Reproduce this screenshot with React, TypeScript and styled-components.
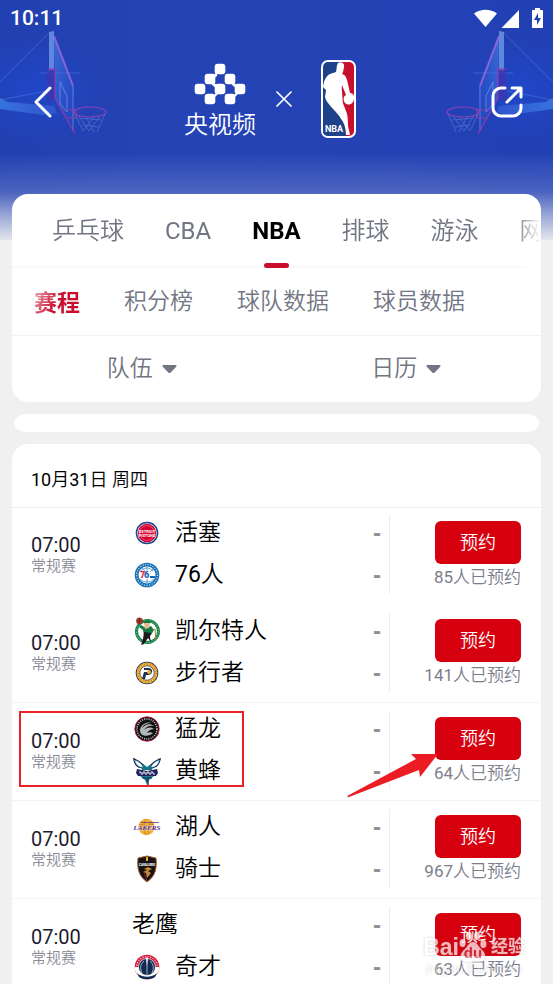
import React, { useState } from "react";
import styled, { createGlobalStyle } from "styled-components";

const GlobalStyle = createGlobalStyle`
  * { box-sizing: border-box; }
  html { scrollbar-width: none; }
  body {
    margin: 0;
    background: #f0f0f0;
    font-family: Roboto, "Noto Sans CJK SC DemiLight", "Noto Sans CJK SC", sans-serif;
    line-height: 1.2;
    color: #000;
  }
  button, select { font: inherit; color: inherit; background: none; border: 0; padding: 0; margin: 0; cursor: pointer; }
`;

const Page = styled.div`
  position: relative;
  min-height: 100vh;
  overflow: hidden;
`;

const Backdrop = styled.div`
  position: absolute;
  inset: 0 0 auto 0;
  height: 240px;
  background:
    linear-gradient(180deg, rgba(240, 240, 240, 0) 152px, rgba(240, 240, 240, 0.2) 192px, rgba(240, 240, 240, 0.56) 214px, rgba(240, 240, 240, 0.94) 240px),
    linear-gradient(90deg, #2140b2, #2443b5 30%, #2442b4 70%, #2140b4);
`;

const Hoop = styled.svg<{ $mirrored?: boolean }>`
  position: absolute;
  top: 20px;
  width: 120px;
  height: 130px;
  ${(p) => (p.$mirrored ? "right: 0; transform: scaleX(-1);" : "left: 0;")}
`;

const TopArea = styled.header`
  position: relative;
  color: #fff;
`;

const StatusBar = styled.div`
  display: flex;
  align-items: center;
  justify-content: space-between;
  height: 38px;
  padding: 0 10px;
  font-size: 21px;
  font-weight: 500;
`;

const StatusIcons = styled.svg`
  width: 70px;
  height: 22px;
`;

const NavBar = styled.div`
  display: flex;
  align-items: center;
  justify-content: space-between;
  height: 122px;
  padding: 0 30px 0 34px;
`;

const IconButton = styled.button`
  display: flex;
  padding: 6px 0 0;
`;

const Brands = styled.div`
  display: flex;
  align-items: center;
  width: 175px;
`;

const Brand = styled.div`
  display: flex;
  flex: none;
  flex-direction: column;
  align-items: center;
  width: 72px;
  font-size: 24px;
  line-height: 28px;
  font-weight: 500;
  white-space: nowrap;
  gap: 6px;
  padding-top: 4px;
`;

const CrossMark = styled.svg`
  margin: 0 29px 0 20px;
  flex: none;
  overflow: visible;
`;

const Main = styled.main`
  position: relative;
  display: flex;
  flex-direction: column;
  gap: 12px;
  padding: 34px 12px 0;
`;

const Card = styled.section`
  position: relative;
  background: #fff;
  border-radius: 16px;
`;

const SportTabs = styled.nav`
  display: flex;
  gap: 41px;
  height: 74px;
  padding-left: 40px;
  overflow: hidden;
  box-shadow: inset 0 -2px 0 #f9f9f9;
  mask-image: linear-gradient(90deg, #000 95%, transparent 100%);
`;

const SportTab = styled.button<{ $active: boolean }>`
  position: relative;
  flex: none;
  font-size: 24px;
  white-space: nowrap;
  color: ${(p) => (p.$active ? "#000" : "#727583")};
  font-weight: ${(p) => (p.$active ? 700 : 400)};
  &::after {
    content: "";
    display: ${(p) => (p.$active ? "block" : "none")};
    position: absolute;
    left: calc(50% - 12px);
    bottom: 0;
    width: 25px;
    height: 5px;
    border-radius: 3px;
    background: #c8102e;
  }
`;

const SectionTabs = styled.nav`
  display: flex;
  gap: 44px;
  height: 68px;
  padding-left: 22px;
  border-bottom: 1px solid #f3f3f3;
`;

const SectionTab = styled.button<{ $active: boolean }>`
  flex: none;
  font-size: 23px;
  font-family: ${(p) => (p.$active ? '"Noto Sans CJK SC", sans-serif' : "inherit")};
  font-weight: ${(p) => (p.$active ? 700 : 400)};
  color: ${(p) => (p.$active ? "transparent" : "#727583")};
  background: ${(p) => (p.$active ? "linear-gradient(120deg, #e896a4 20%, #c8102e 50%)" : "none")};
  background-clip: text;
`;

const Filters = styled.div`
  display: grid;
  grid-template-columns: 1fr 1fr;
  height: 66px;
`;

const Filter = styled.label`
  display: flex;
  align-items: center;
  justify-content: center;
  gap: 9px;
  padding-right: 5px;
  color: #727583;
`;

const FilterSelect = styled.select`
  appearance: none;
  font-size: 23px;
  width: 46px;
  height: 34px;
  outline: none;
`;

const Pill = styled.div`
  height: 18px;
  margin: 0 2px;
  border-radius: 12px / 9px;
  background: #fff;
`;

const ScheduleCard = styled(Card)`
  padding-bottom: 24px;
`;

const DateHeading = styled.h2`
  display: flex;
  align-items: center;
  height: 63px;
  margin: 0;
  padding: 9px 19px 0;
  font-size: 18px;
  font-weight: 400;
  box-shadow: 0 1px 0 #ededed;
`;

const Matches = styled.ul`
  margin: 0;
  padding: 0;
  list-style: none;
`;

const MatchRow = styled.li<{ $line: boolean }>`
  position: relative;
  display: grid;
  grid-template-columns: 101px 1fr 8px 152px;
  height: 98px;
  padding-left: 19px;
  border-bottom: 1px solid ${(p) => (p.$line ? "#f4f4f4" : "transparent")};
`;

const Kickoff = styled.div`
  display: flex;
  flex-direction: column;
  justify-content: center;
  padding-bottom: 1px;
`;

const Time = styled.time`
  font-size: 20px;
  line-height: 22px;
  color: #1d1b2e;
`;

const Stage = styled.span`
  font-size: 15px;
  line-height: 20px;
  color: #898b96;
`;

const Teams = styled.div`
  display: flex;
  flex-direction: column;
  padding: 5px 0 8px;
`;

const TeamLine = styled.div`
  display: flex;
  align-items: center;
  gap: 13px;
  height: 42px;
  font-size: 23px;
`;

const Crest = styled.svg`
  flex: none;
  width: 30px;
  height: 30px;
`;

const Score = styled.span`
  margin-left: auto;
  font-family: "Liberation Sans", sans-serif;
  font-size: 24px;
  font-weight: 700;
  color: #909097;
`;

const Booking = styled.div`
  display: flex;
  flex-direction: column;
  align-items: flex-end;
  margin: 8px 0 10px;
  padding: 6px 20px 0 0;
  border-left: 1px solid #ececf2;
`;

const BookButton = styled.button`
  width: 86px;
  height: 43px;
  flex: none;
  border-radius: 6px;
  background: #d7000f;
  color: #fff;
  font-size: 18px;
`;

const Booked = styled.span`
  font-size: 17px;
  line-height: 26px;
  color: #7b7e8a;
  white-space: nowrap;
`;

const Highlight = styled.div`
  position: absolute;
  left: 7px;
  top: 8px;
  width: 225px;
  height: 76px;
  border: 2px solid #ec2027;
`;

const Arrow = styled.svg`
  position: absolute;
  right: 100px;
  top: 48px;
  width: 94px;
  height: 48px;
`;

const Watermark = styled.div`
  position: fixed;
  right: 28px;
  bottom: 10px;
  color: #fff;
  opacity: 0.72;
  pointer-events: none;
  text-align: right;
  filter: drop-shadow(0 0 1px rgba(110, 110, 120, 0.5));
`;

const WatermarkName = styled.div`
  display: flex;
  align-items: center;
  justify-content: flex-end;
  font: 700 23px/26px "Liberation Sans", "Noto Sans CJK SC", sans-serif;
`;

const WatermarkCn = styled.span`
  margin-left: 4px;
  font-size: 17px;
`;

const WatermarkUrl = styled.div`
  font: 400 12px/10px "Liberation Sans", sans-serif;
  text-align: center;
  opacity: 0.6;
`;

const PawIcon = () => (
  <svg width="28" height="34" viewBox="0 0 28 34">
    <g fill="#fff">
      <ellipse cx="3.6" cy="13" rx="3" ry="4" />
      <ellipse cx="10" cy="6" rx="3" ry="4.3" />
      <ellipse cx="18" cy="6" rx="3" ry="4.3" />
      <ellipse cx="24.4" cy="14" rx="3" ry="4" />
      <path d="M14 12c4 0 5 4 8 7s5 5 4 9c-1 5-6 4-12 4S3 33 2 28c-1-4 1-6 4-9s4-7 8-7Z" />
    </g>
    <text x="14" y="28" fontFamily="Liberation Sans" fontWeight="700" fontSize="15" fill="#c83a44" textAnchor="middle">du</text>
  </svg>
);

function HoopArt() {
  return (
    <>
      <defs>
        <linearGradient id="board" x1="0" y1="0" x2="1" y2="1">
          <stop offset="0" stopColor="#5b9bf0" />
          <stop offset="1" stopColor="#2b4ed0" stopOpacity=".3" />
        </linearGradient>
        <radialGradient id="glow">
          <stop offset="0" stopColor="#1f4ad6" stopOpacity=".6" />
          <stop offset="1" stopColor="#1f4ad6" stopOpacity="0" />
        </radialGradient>
        <linearGradient id="arm" x1="0" y1="0" x2="1" y2="0">
          <stop offset="0" stopColor="#3c7fe4" />
          <stop offset="1" stopColor="#3f69dd" stopOpacity=".6" />
        </linearGradient>
      </defs>
      <ellipse cx="34" cy="70" rx="66" ry="50" fill="url(#glow)" />
      <path d="M0 78l8 4 46 4 3 7-14 2-43-6Z" fill="url(#arm)" opacity=".8" />
      <path d="M0 62L50 12M0 80l46-9M40 53h40" stroke="#4872dc" strokeWidth="1" opacity=".65" fill="none" />
      <path d="M49 12l5-1v40h-5Z" fill="#6f98e8" opacity=".8" />
      <path d="M54 16l20 51-1 44-18-33Z" fill="url(#board)" opacity=".5" />
      <path d="M54 16l19 50" stroke="#a86be0" strokeWidth="2" opacity=".75" />
      <path d="M73 66v45M60 62v22l7 8V76Z" stroke="#789bed" fill="none" opacity=".65" />
      <path d="M47 49h8v29l-8 4Z" fill="#3d35ad" opacity=".75" />
      <path d="M47 49h8v29l20 36M66 90h10v8H67" stroke="#a336a5" strokeWidth="1.2" fill="none" opacity=".85" />
      <ellipse cx="90" cy="92" rx="16" ry="5" stroke="#8f40b4" strokeWidth="1.2" fill="none" />
      <path d="M75 94l8 17M79 96l10 15M86 97l8 15M105 94l-8 18M100 96l-11 15M94 97l-11 14M79 98l22 2M83 105l15 2" stroke="#6c89dc" strokeWidth="1" opacity=".5" />
    </>
  );
}

const YangshipinMark = () => (
  <svg width="52" height="42" viewBox="0 0 52 42" fill="#fff">
    {[[26, 6], [16, 16], [36, 16], [6, 26], [26, 26], [46, 26], [16, 36], [36, 36]].map(([x, y]) => (
      <rect key={`${x}-${y}`} x={x - 5.3} y={y - 5.3} width="10.6" height="10.6" rx="3" />
    ))}
    <path d="M19 12l4-3v4l-4 3ZM39 19l4 3-1 3-4-3ZM19 19l4 3-1 3-4-3ZM19 33l4-4 1 2-4 4ZM39 33l4-4 1 2-4 4Z" />
  </svg>
);

const NbaMark = () => (
  <svg width="35" height="78" viewBox="0 0 35 78">
    <clipPath id="nba-clip"><rect x="2" y="2" width="31" height="74" rx="5" /></clipPath>
    <rect width="35" height="78" rx="7" fill="#fff" />
    <g clipPath="url(#nba-clip)">
      <path d="M2 2h17v74H2Z" fill="#1d428a" />
      <path d="M19 2h14v74h-9Z" fill="#c8102e" />
      <path d="M2 40h4l18 24 1 12H2Z" fill="#1d428a" />
      <path d="M17 3c3-2 7 0 6 4l-1 5-1 2c4 1 5 5 6 10l2 9c3 0 5 3 4 6-1 7-9 7-10 2-1-3 0-5 2-6l-4-10-2 7c1 8 4 13 6 19 3 7 1 14 3 19l1 5h-4c0-7-2-13-6-18C13 49 5 43 4 37l1-7-3-3c1-7 3-11 7-13l6-2c1-3 0-6 2-9Z" fill="#fff" />
    </g>
    <text x="4" y="72" fontFamily="Roboto, sans-serif" fontWeight="700" fontSize="9" fill="#fff">NBA</text>
  </svg>
);

type CrestId = "pistons" | "sixers" | "celtics" | "pacers" | "raptors" | "hornets" | "lakers" | "cavs" | "wizards";

const crestArt: Record<CrestId, React.ReactNode> = {
  pistons: (
    <>
      <circle cx="15" cy="15" r="11.3" fill="#1d428a" />
      <circle cx="15" cy="15" r="9.8" fill="#fff" />
      <circle cx="15" cy="15" r="9.2" fill="#d50032" />
      <circle cx="15" cy="15" r="7.4" fill="none" stroke="#f5a5b5" strokeWidth=".5" />
      <text x="15" y="14.5" fontSize="4" fontWeight="700" textAnchor="middle" fill="#fff">DETROIT</text>
      <text x="15" y="18.5" fontSize="4" fontWeight="700" textAnchor="middle" fill="#fff">PISTONS</text>
    </>
  ),
  sixers: (
    <>
      <circle cx="15" cy="15" r="12.3" fill="#1772b8" />
      <circle cx="15" cy="15" r="10.4" fill="none" stroke="#d7eaf8" strokeWidth="1.2" strokeDasharray="1 1.6" />
      <circle cx="15" cy="15" r="8.5" fill="#fff" />
      <path d="M9 11c4-4 8-4 12 0M8 19c4 4 10 4 14 0M15 7v4M10 8c2 2 3 3 4 4M21 9l-3 3M15 19v4" stroke="#3c8cc6" fill="none" strokeWidth=".8" />
      <text x="8" y="18" fontSize="9" fontWeight="900" fill="#e01e46">7</text>
      <text x="12" y="18" fontSize="9" fontWeight="900" fill="#1265ac">6</text>
      <path d="M18 16h5v2h-5Z" fill="#1265ac" />
    </>
  ),
  celtics: (
    <>
      <circle cx="15.5" cy="15.5" r="11" fill="#fff" stroke="#16834b" strokeWidth="3" />
      <circle cx="15.5" cy="15.5" r="11" fill="none" stroke="#b8dfc9" strokeWidth="1" strokeDasharray="1 2" />
      <circle cx="7.5" cy="5" r="3.4" fill="#a5402d" />
      <path d="M5 5h5M7.500 2v6" stroke="#4b1a15" strokeWidth=".6" />
      <path d="M12 5l6-1 1 3-7 1ZM9 9l5 3 5-2 3 4-3 5h-7l-1-5-4-3Z" fill="#127a43" />
      <path d="M12 7h6l-1 5-4 1Z" fill="#e5b98e" />
      <path d="M12 16l7 1-1 4 1 5-3-4-4 6-3 1 2-6Z" fill="#1d1c1a" />
      <path d="M21 14l2-1 1 11" stroke="#b08034" fill="none" />
    </>
  ),
  pacers: (
    <>
      <circle cx="15" cy="15" r="11.3" fill="#1e2e54" />
      <circle cx="15" cy="15" r="10.5" fill="#f5b335" />
      <circle cx="15" cy="15" r="9" fill="none" stroke="#836738" strokeWidth="1" strokeDasharray="1 2" />
      <circle cx="15" cy="15" r="7.2" fill="#fff" stroke="#1e2e54" strokeWidth=".7" />
      <path d="M12 10h4c6 0 5 7 0 7h-2l-1 4h-3l2-7h4c1 0 2-2 0-2h-4Z" fill="#1e2e54" />
      <circle cx="17" cy="14" r="2" fill="#f5b335" />
    </>
  ),
  raptors: (
    <>
      <circle cx="15" cy="15" r="12.2" fill="#111" stroke="#c31440" strokeWidth=".9" />
      <circle cx="15" cy="15" r="10" fill="none" stroke="#ccc" strokeWidth="1.6" strokeDasharray="1 1.2" />
      <circle cx="15" cy="15" r="8" fill="#111" />
      <path d="M8 17c0-6 6-10 12-8-5 0-9 2-10 5 4-4 8-5 12-2-5-1-8 1-10 4 4-3 7-3 10-1-3 0-6 2-7 4 2-1 4-1 6 0-4 4-12 4-13-2Z" fill="#b4b7ba" />
    </>
  ),
  hornets: (
    <>
      <path d="M1 2c2 0 8 4 11 7l3 3 3-3c3-3 9-7 11-7-1 6-4 10-8 10l-2 2h-8l-2-2C5 12 2 9 1 2Z" fill="#201747" />
      <path d="M2.500 4c4 1 7 4 9 7C7 12 4 9 2.500 4ZM27.500 4c-4 1-7 4-9 7 4.500 1 7.500-2 9-7Z" fill="#fff" stroke="#289ab0" strokeWidth=".6" />
      <path d="M11 8l4 3 4-3 1 6h-10Z" fill="#12778e" />
      <path d="M5 13l10 2 10-2 1 4-2 3H6l-2-3Z" fill="#26215f" />
      <path d="M7 16h2v2h2v-2h2v2h2v-2h2v2h2v-2h2v2h2" stroke="#dce9ef" fill="none" />
      <path d="M8 20h14l-5 4-2 5-2-5Z" fill="#178299" />
      <path d="M10 22h10M14 24h2v5" stroke="#201747" strokeWidth="1.2" fill="none" />
    </>
  ),
  lakers: (
    <>
      <circle cx="14.500" cy="15" r="8.2" fill="#f4af31" />
      <path d="M7 12c5 2 10 2 15 0M14 7c-3 5-3 11 0 16M20 9c-4 4-5 8-3 13" stroke="#b66a29" strokeWidth=".7" fill="none" />
      <path d="M9 10.500h18" stroke="#653a83" strokeWidth=".8" />
      <text x="15" y="18" textAnchor="middle" fontSize="7" fontStyle="italic" fontWeight="700" fontFamily="Liberation Serif" fill="#552583" stroke="#fff" strokeWidth=".5" paintOrder="stroke">LAKERS</text>
    </>
  ),
  cavs: (
    <>
      <path d="M6 4l9-2 9 2c1 9 0 18-9 24C6 22 5 13 6 4Z" fill="#171313" stroke="#a56536" strokeWidth="1" />
      <path d="M14 3h2v4h-2Z" fill="#e9ae35" />
      <text x="15" y="12" fontSize="3" fontWeight="900" textAnchor="middle" fill="#fff">CAVALIERS</text>
      <path d="M16 13l4 2-4 2 3 2-4 5-1-5-3-1 4-2-3-1Z" fill="#c98932" />
      <path d="M12 19l3 8" stroke="#822438" />
    </>
  ),
  wizards: (
    <>
      <circle cx="15" cy="15" r="12.3" fill="#d71e42" />
      <circle cx="15" cy="15" r="10.4" fill="none" stroke="#ffdbe1" strokeWidth="1.3" strokeDasharray="1 1.6" />
      <path d="M3 15h24v3c-4 12-20 12-24 0Z" fill="#fff" />
      <circle cx="15" cy="15" r="8.500" fill="#132b50" stroke="#fff" strokeWidth=".7" />
      <path d="M15 7v16M12 9c-4 3-4 8-2 12M18 9c4 3 4 8 2 12" stroke="#c5cede" fill="none" strokeWidth=".8" />
      <path d="M5 21c5 5 15 5 20 0l-2 4c-4 3-12 3-16 0Z" fill="#132b50" />
      <path d="M14 6l1-1 1 1-1 8Z" fill="#fff" />
    </>
  ),
};

interface Team { name: string; crest?: CrestId }
interface Match { home: Team; away: Team; booked: number; line: boolean; marked?: boolean }

const matches: Match[] = [
  { home: { name: "活塞", crest: "pistons" }, away: { name: "76人", crest: "sixers" }, booked: 85, line: false },
  { home: { name: "凯尔特人", crest: "celtics" }, away: { name: "步行者", crest: "pacers" }, booked: 141, line: true },
  { home: { name: "猛龙", crest: "raptors" }, away: { name: "黄蜂", crest: "hornets" }, booked: 64, line: true, marked: true },
  { home: { name: "湖人", crest: "lakers" }, away: { name: "骑士", crest: "cavs" }, booked: 967, line: true },
  { home: { name: "老鹰" }, away: { name: "奇才", crest: "wizards" }, booked: 63, line: false },
];

const TeamEntry = ({ team }: { team: Team }) => (
  <TeamLine>
    {team.crest && <Crest viewBox="0 0 30 30" aria-hidden="true">{crestArt[team.crest]}</Crest>}
    <span>{team.name}</span>
    <Score>-</Score>
  </TeamLine>
);

const Caret = () => (
  <svg width="15" height="9" viewBox="0 0 15 9" fill="#727583" aria-hidden="true">
    <path d="M1.500 0h12c1 0 1.400 1 .7 1.700L8.700 7.500c-.7.700-1.700.700-2.400 0L.8 1.700C.1 1 .5 0 1.500 0Z" />
  </svg>
);

const sports = ["乒乓球", "CBA", "NBA", "排球", "游泳", "网球"];
const sections = ["赛程", "积分榜", "球队数据", "球员数据"];

export default function App() {
  const [sport, setSport] = useState("NBA");
  const [section, setSection] = useState("赛程");
  return (
    <>
      <GlobalStyle />
      <Page>
        <Backdrop>
          <Hoop viewBox="0 0 120 130" aria-hidden="true"><HoopArt /></Hoop>
          <Hoop viewBox="0 0 120 130" aria-hidden="true" $mirrored><HoopArt /></Hoop>
        </Backdrop>
        <TopArea>
          <StatusBar>
            <span>10:11</span>
            <StatusIcons viewBox="0 0 70 22" fill="#fff" aria-hidden="true">
              <path d="M1 5.500C8 .5 17 .5 24 5.500L12.500 19Z" />
              <path d="M46 2v18H28.500Z" />
              <path fillRule="evenodd" d="M62 0h5v2h2c1 0 1 0 1 1v16c0 1 0 1-1 1h-9c-1 0-1 0-1-1V3c0-1 0-1 1-1h2ZM65 5l-4 7h3v5l4-7h-3Z" />
            </StatusIcons>
          </StatusBar>
          <NavBar>
            <IconButton aria-label="返回">
              <svg width="18" height="32" viewBox="0 0 18 32" fill="none" stroke="#fff" strokeWidth="3" strokeLinecap="round" strokeLinejoin="round"><path d="M16 2L2 16l14 14" /></svg>
            </IconButton>
            <Brands>
              <Brand><YangshipinMark />央视频</Brand>
              <CrossMark width="16" height="16" viewBox="0 0 16 16" stroke="#fff" strokeWidth="1.700" strokeLinecap="round"><path d="M1 1l14 14M15 1L1 15" /></CrossMark>
              <NbaMark />
            </Brands>
            <IconButton aria-label="分享">
              <svg width="32" height="32" viewBox="0 0 32 32" fill="none" stroke="#fff" strokeWidth="3" strokeLinecap="round" strokeLinejoin="round"><path d="M14 2H10a8 8 0 0 0-8 8v12a8 8 0 0 0 8 8h12a8 8 0 0 0 8-8v-3M21 2h9v9M30 2L16 16" /></svg>
            </IconButton>
          </NavBar>
        </TopArea>
        <Main>
          <Card>
            <SportTabs>
              {sports.map((s) => <SportTab key={s} $active={s === sport} onClick={() => setSport(s)}>{s}</SportTab>)}
            </SportTabs>
            <SectionTabs>
              {sections.map((s) => <SectionTab key={s} $active={s === section} onClick={() => setSection(s)}>{s}</SectionTab>)}
            </SectionTabs>
            <Filters>
              <Filter><FilterSelect aria-label="队伍"><option>队伍</option></FilterSelect><Caret /></Filter>
              <Filter><FilterSelect aria-label="日历"><option>日历</option></FilterSelect><Caret /></Filter>
            </Filters>
          </Card>
          <Pill />
          <ScheduleCard>
            <DateHeading>10月31日 周四</DateHeading>
            <Matches>
              {matches.map((m) => (
                <MatchRow key={m.away.name} $line={m.line}>
                  <Kickoff><Time>07:00</Time><Stage>常规赛</Stage></Kickoff>
                  <Teams><TeamEntry team={m.home} /><TeamEntry team={m.away} /></Teams>
                  <span />
                  <Booking><BookButton>预约</BookButton><Booked>{m.booked}人已预约</Booked></Booking>
                  {m.marked && (
                    <>
                      <Highlight />
                      <Arrow viewBox="0 0 94 48" aria-hidden="true"><path d="M91 3L64 3l5 5L2 44c-2 1-2 3 0 2l70-27 1 7Z" fill="#ec1c24" /></Arrow>
                    </>
                  )}
                </MatchRow>
              ))}
            </Matches>
          </ScheduleCard>
        </Main>
        <Watermark>
          <WatermarkName>Bai<PawIcon /><WatermarkCn>经验</WatermarkCn></WatermarkName>
          <WatermarkUrl>jingyan.baidu.com</WatermarkUrl>
        </Watermark>
      </Page>
    </>
  );
}
